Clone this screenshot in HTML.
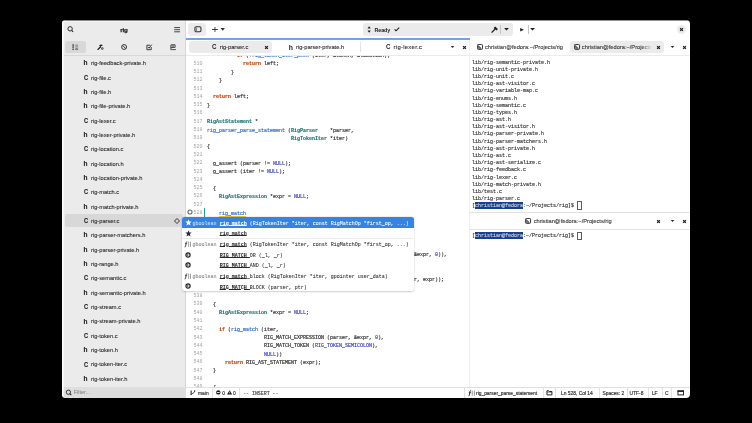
<!DOCTYPE html><html><head><meta charset="utf-8"><style>
*{margin:0;padding:0;box-sizing:border-box}
html,body{width:752px;height:423px;background:#000;overflow:hidden}
body{font-family:"Liberation Sans",sans-serif;color:#2e2e2e}
#w{position:absolute;left:62px;top:20px;width:628px;height:378px;overflow:hidden;border-radius:4px;background:#fff}
#in{position:absolute;left:-62px;top:-20px;width:752px;height:423px;will-change:transform}
.a{position:absolute}
.mono{font-family:"Liberation Mono",monospace;font-size:5px;white-space:pre}
.sans{font-family:"Liberation Sans",sans-serif;white-space:nowrap}
.ln{position:absolute;left:186px;width:16.5px;text-align:right;color:#a4a4a4;font-family:"Liberation Mono",monospace;font-size:5px;line-height:8.3px;white-space:pre}
.cl{position:absolute;left:207px;margin-top:0.6px;-webkit-text-stroke:0.15px currentColor;color:#2a2a2a;font-family:"Liberation Mono",monospace;font-size:5px;line-height:8.3px;white-space:pre}
.k{color:#c4410c;font-weight:bold}
.t{color:#1b7677;font-weight:bold}
.f{color:#2867cc}
.u{text-decoration:underline;text-decoration-thickness:0.45px;text-underline-offset:0.5px}
.n{color:#3b3fbf}
.frow{position:absolute;left:64px;width:119px;height:13px}
.fi{position:absolute;left:82.5px;margin-top:0.3px;width:6px;text-align:center;font-weight:bold;font-size:6.5px;color:#222;-webkit-text-stroke:0.1px #222}
.ft{position:absolute;left:91px;margin-top:1.1px;font-size:5.7px;color:#2c2c2c;-webkit-text-stroke:0.1px #2c2c2c}
.term{position:absolute;left:472px;margin-top:0.9px;-webkit-text-stroke:0.12px currentColor;color:#2a2a2a;font-family:"Liberation Mono",monospace;font-size:5px;line-height:7.2px;white-space:pre}
.sb{position:absolute;top:387.6px;height:11px;font-size:4.9px;line-height:11px;color:#2a2a2a;white-space:nowrap;-webkit-text-stroke:0.15px currentColor}
.sep{position:absolute;top:387.5px;width:0.6px;height:10.5px;background:#e2e2e2}
.pr{position:absolute;left:183px;width:231px;height:10.7px;font-family:"Liberation Mono",monospace;font-size:5px;line-height:10.7px;white-space:pre;color:#303030;-webkit-text-stroke:0.06px currentColor}
.pr .ty{position:absolute;top:0;left:9.5px;color:#8a8a8a;-webkit-text-stroke:0.1px currentColor}
.pr .nm{position:absolute;top:0;left:36.7px}
.pr b{font-weight:bold;text-decoration:underline;text-decoration-thickness:0.45px;text-underline-offset:0.15px}
</style></head><body>
<div id="w"><div id="in">
<div class="a" style="left:62px;top:20px;width:123.5px;height:378px;background:#ebebeb"></div>
<div class="a" style="left:185.3px;top:20px;width:0.8px;height:378px;background:#d6d6d6"></div>
<svg class="a" style="left:66px;top:25px" width="8" height="8" viewBox="0 0 8 8"><circle cx="4.1" cy="3.8" r="2.2" fill="none" stroke="#2a2a2a" stroke-width="1"/><line x1="5.7" y1="5.4" x2="7.1" y2="6.8" stroke="#2a2a2a" stroke-width="1.1"/></svg>
<div class="a sans" style="left:112px;top:25px;width:24px;text-align:center;font-size:6.2px;font-weight:bold;line-height:9px;color:#222;letter-spacing:-0.1px;-webkit-text-stroke:0.25px #222">rig</div>
<svg class="a" style="left:173.8px;top:26.8px" width="7" height="6" viewBox="0 0 7 6"><rect x="0.2" y="0.2" width="5.8" height="0.85" fill="#2a2a2a"/><rect x="0.2" y="2.3" width="5.8" height="0.85" fill="#2a2a2a"/><rect x="0.2" y="4.4" width="5.8" height="0.85" fill="#2a2a2a"/></svg>
<div class="a" style="left:64.5px;top:40.5px;width:21.5px;height:12.3px;background:#d8d8d8;border-radius:2.5px"></div>
<svg class="a" style="left:72px;top:44px" width="7" height="7" viewBox="0 0 7 7"><circle cx="1.1" cy="1.1" r="0.8" fill="#1e1e1e"/><circle cx="1.1" cy="3.1" r="0.8" fill="#1e1e1e"/><circle cx="1.1" cy="5.2" r="0.8" fill="#1e1e1e"/><rect x="3.2" y="0.75" width="2.9" height="0.8" fill="#6a6a6a"/><rect x="3.2" y="2.55" width="2.9" height="0.8" fill="#6a6a6a"/><rect x="3.2" y="4.6" width="2.9" height="0.9" fill="#1e1e1e"/></svg>
<svg class="a" style="left:96.5px;top:44px" width="8" height="7" viewBox="0 0 8 7"><path d="M0.9 5.5 L3.4 3" stroke="#1e1e1e" stroke-width="1.15" stroke-linecap="round"/><path d="M2.3 1.3 C3.3 0.2 4.9 0.2 5.8 1.2 L4.9 2 L4.6 1.8 L3.6 3 L2.6 2.2Z" fill="#1e1e1e"/><circle cx="5.3" cy="4.4" r="1.25" fill="#4a4a4a"/><circle cx="5.3" cy="4.4" r="0.45" fill="#ebebeb"/></svg>
<svg class="a" style="left:121px;top:44.4px" width="7" height="6" viewBox="0 0 7 6"><circle cx="3.1" cy="3" r="2.45" fill="none" stroke="#2a2a2a" stroke-width="0.95"/><line x1="1.5" y1="1.4" x2="4.7" y2="4.6" stroke="#2a2a2a" stroke-width="0.9"/></svg>
<svg class="a" style="left:145.5px;top:44px" width="7" height="7" viewBox="0 0 7 7"><path d="M5.2 3 L5.2 5.7 L0.9 5.7 L0.9 1.2 L4.2 1.2" fill="none" stroke="#2a2a2a" stroke-width="0.9"/><path d="M1.9 3 L3 4.2 L5.8 0.6" fill="none" stroke="#2a2a2a" stroke-width="0.9"/></svg>
<svg class="a" style="left:169.6px;top:44.2px" width="7" height="7" viewBox="0 0 7 7"><path d="M0.9 5.2 L0.9 0.8 L5.1 0.8 L5.1 3.4 L0.9 3.4 M3 0.8 L3 3.4" fill="none" stroke="#2a2a2a" stroke-width="0.85"/><line x1="0.5" y1="5.6" x2="5.9" y2="5.6" stroke="#2a2a2a" stroke-width="0.8"/></svg>
<div class="a" style="left:62px;top:55.2px;width:123.5px;height:0.7px;background:#d8d8d8"></div>
<div class="fi sans" style="top:58.10px;line-height:9px">h</div>
<div class="ft sans" style="top:58.10px;line-height:9px">rig-feedback-private.h</div>
<div class="fi sans" style="top:72.44px;line-height:9px;transform:scaleX(0.86)">C</div>
<div class="ft sans" style="top:72.44px;line-height:9px">rig-file.c</div>
<div class="fi sans" style="top:86.78px;line-height:9px">h</div>
<div class="ft sans" style="top:86.78px;line-height:9px">rig-file.h</div>
<div class="fi sans" style="top:101.12px;line-height:9px">h</div>
<div class="ft sans" style="top:101.12px;line-height:9px">rig-file-private.h</div>
<div class="fi sans" style="top:115.46px;line-height:9px;transform:scaleX(0.86)">C</div>
<div class="ft sans" style="top:115.46px;line-height:9px">rig-lexer.c</div>
<div class="fi sans" style="top:129.80px;line-height:9px">h</div>
<div class="ft sans" style="top:129.80px;line-height:9px">rig-lexer-private.h</div>
<div class="fi sans" style="top:144.14px;line-height:9px;transform:scaleX(0.86)">C</div>
<div class="ft sans" style="top:144.14px;line-height:9px">rig-location.c</div>
<div class="fi sans" style="top:158.48px;line-height:9px">h</div>
<div class="ft sans" style="top:158.48px;line-height:9px">rig-location.h</div>
<div class="fi sans" style="top:172.82px;line-height:9px">h</div>
<div class="ft sans" style="top:172.82px;line-height:9px">rig-location-private.h</div>
<div class="fi sans" style="top:187.16px;line-height:9px;transform:scaleX(0.86)">C</div>
<div class="ft sans" style="top:187.16px;line-height:9px">rig-match.c</div>
<div class="fi sans" style="top:201.50px;line-height:9px">h</div>
<div class="ft sans" style="top:201.50px;line-height:9px">rig-match-private.h</div>
<div class="a" style="left:64.5px;top:214.04px;width:118.5px;height:12.6px;background:#d8d8d8;border-radius:2.5px"></div>
<svg class="a" style="left:174.4px;top:217.54px" width="6" height="6" viewBox="0 0 6 6"><path d="M3 0.5 L5.5 3 L3 5.5 L0.5 3Z" fill="none" stroke="#2a2a2a" stroke-width="0.95" stroke-linejoin="round"/></svg>
<div class="fi sans" style="top:215.84px;line-height:9px;transform:scaleX(0.86)">C</div>
<div class="ft sans" style="top:215.84px;line-height:9px">rig-parser.c</div>
<div class="fi sans" style="top:230.18px;line-height:9px">h</div>
<div class="ft sans" style="top:230.18px;line-height:9px">rig-parser-matchers.h</div>
<div class="fi sans" style="top:244.52px;line-height:9px">h</div>
<div class="ft sans" style="top:244.52px;line-height:9px">rig-parser-private.h</div>
<div class="fi sans" style="top:258.86px;line-height:9px">h</div>
<div class="ft sans" style="top:258.86px;line-height:9px">rig-range.h</div>
<div class="fi sans" style="top:273.20px;line-height:9px;transform:scaleX(0.86)">C</div>
<div class="ft sans" style="top:273.20px;line-height:9px">rig-semantic.c</div>
<div class="fi sans" style="top:287.54px;line-height:9px">h</div>
<div class="ft sans" style="top:287.54px;line-height:9px">rig-semantic-private.h</div>
<div class="fi sans" style="top:301.88px;line-height:9px;transform:scaleX(0.86)">C</div>
<div class="ft sans" style="top:301.88px;line-height:9px">rig-stream.c</div>
<div class="fi sans" style="top:316.22px;line-height:9px">h</div>
<div class="ft sans" style="top:316.22px;line-height:9px">rig-stream-private.h</div>
<div class="fi sans" style="top:330.56px;line-height:9px;transform:scaleX(0.86)">C</div>
<div class="ft sans" style="top:330.56px;line-height:9px">rig-token.c</div>
<div class="fi sans" style="top:344.90px;line-height:9px">h</div>
<div class="ft sans" style="top:344.90px;line-height:9px">rig-token.h</div>
<div class="fi sans" style="top:359.24px;line-height:9px;transform:scaleX(0.86)">C</div>
<div class="ft sans" style="top:359.24px;line-height:9px">rig-token-iter.c</div>
<div class="fi sans" style="top:373.58px;line-height:9px">h</div>
<div class="ft sans" style="top:373.58px;line-height:9px">rig-token-iter.h</div>
<div class="a" style="left:62px;top:386.6px;width:123.5px;height:11.4px;background:#dedede"></div>
<svg class="a" style="left:64.5px;top:388.6px" width="8" height="8" viewBox="0 0 8 8"><circle cx="3.4" cy="3.2" r="2.15" fill="none" stroke="#2e2e2e" stroke-width="0.95"/><line x1="4.9" y1="4.7" x2="6.3" y2="6.1" stroke="#2e2e2e" stroke-width="1.05"/></svg>
<div class="a sans" style="left:73.8px;top:387px;font-size:5.4px;line-height:10px;color:#7a7a7a">Filter...</div>
<div class="a" style="left:188.4px;top:23px;width:17.6px;height:13px;background:#ebebeb;border-radius:3px"></div>
<svg class="a" style="left:193.5px;top:26.3px" width="8" height="7" viewBox="0 0 8 7"><rect x="0.95" y="0.8" width="6" height="5" rx="1.2" fill="none" stroke="#2e2e2e" stroke-width="1.05"/><rect x="1.6" y="1.4" width="1.4" height="3.8" fill="#8a8a8a"/></svg>
<svg class="a" style="left:212px;top:26.9px" width="13" height="5" viewBox="0 0 13 5"><rect x="0" y="2.05" width="5.9" height="0.9" fill="#2e2e2e"/><rect x="2.5" y="0" width="0.9" height="4.9" fill="#2e2e2e"/><path d="M8.5 1.1 L12.9 1.1 L10.7 3.8Z" fill="#2e2e2e"/></svg>
<div class="a" style="left:363px;top:23px;width:150px;height:13px;background:#ebebeb;border-radius:3px"></div>
<svg class="a" style="left:366.5px;top:26px" width="5" height="8" viewBox="0 0 5 8"><path d="M0.5 2.4 L2.15 0.2 L3.8 2.4Z M0.5 4.6 L2.15 6.8 L3.8 4.6Z" fill="#1e1e1e"/></svg>
<div class="a sans" style="left:374.6px;top:25.6px;font-size:5.4px;font-weight:bold;line-height:9px;color:#1e1e1e;letter-spacing:-0.15px">Ready</div>
<svg class="a" style="left:393.8px;top:26.8px" width="6" height="5" viewBox="0 0 6 5"><path d="M0.6 2.4 L2 3.8 L5.2 0.6" fill="none" stroke="#1e1e1e" stroke-width="1.15"/></svg>
<svg class="a" style="left:491px;top:25.8px" width="8" height="7" viewBox="0 0 8 7"><path d="M1 6.2 L4.2 2.9" stroke="#1e1e1e" stroke-width="1.25" stroke-linecap="round"/><path d="M2.6 1.9 L4.1 0.4 L6.9 3.1 L5.6 4.4 L4.5 3.5 L3.7 3.1Z" fill="#1e1e1e"/></svg>
<div class="a" style="left:500.4px;top:25.2px;width:0.6px;height:8.4px;background:#c4c4c4"></div>
<svg class="a" style="left:504.4px;top:28px" width="5" height="3" viewBox="0 0 5 3"><path d="M0.1 0 L4.9 0 L2.5 2.5Z" fill="#1e1e1e"/></svg>
<svg class="a" style="left:520px;top:27.5px" width="5" height="4" viewBox="0 0 5 4"><path d="M0.2 0.1 L4 1.7 L0.2 3.4Z" fill="#1e1e1e"/></svg>
<div class="a" style="left:528.3px;top:25.2px;width:0.6px;height:8.4px;background:#c4c4c4"></div>
<svg class="a" style="left:530.3px;top:28px" width="5" height="3" viewBox="0 0 5 3"><path d="M0.1 0 L4.9 0 L2.5 2.5Z" fill="#1e1e1e"/></svg>
<div class="a" style="left:677px;top:24.9px;width:9px;height:9px;border-radius:50%;background:#ebebeb"></div>
<svg class="a" style="left:679px;top:26.9px" width="5" height="5" viewBox="0 0 5 5"><path d="M1.1 1.1 L3.9 3.9 M3.9 1.1 L1.1 3.9" stroke="#1e1e1e" stroke-width="1.2"/></svg>
<div class="a" style="left:186px;top:38px;width:284px;height:1.6px;background:#6fa3ea"></div>
<div class="a" style="left:186px;top:55.1px;width:504px;height:0.7px;background:#ebebeb"></div>
<div class="a" style="left:469.2px;top:39.5px;width:1.2px;height:347.5px;background:#eeeeee"></div>
<div class="a" style="left:189px;top:41px;width:82.6px;height:11.6px;background:#ebebeb;border-radius:3px"></div>
<div class="a sans" style="left:212.3px;top:42.4px;font-size:7px;font-weight:bold;line-height:9px;color:#222;transform:scaleX(0.88);transform-origin:0 0">C</div>
<div class="a sans" style="left:219.8px;top:42.5px;font-size:5.7px;line-height:9px;color:#2a2a2a;-webkit-text-stroke:0.1px #2a2a2a">rig-parser.c</div>
<svg class="a" style="left:263.5px;top:44.7px" width="5" height="5" viewBox="0 0 5 5"><path d="M1.1 1.1 L3.9 3.9 M3.9 1.1 L1.1 3.9" stroke="#1e1e1e" stroke-width="1.2"/></svg>
<div class="a sans" style="left:288.7px;top:42.6px;font-size:6.8px;font-weight:bold;line-height:9px;color:#222">h</div>
<div class="a sans" style="left:296px;top:42.5px;font-size:5.7px;line-height:9px;color:#2a2a2a;-webkit-text-stroke:0.1px #2a2a2a">rig-parser-private.h</div>
<div class="a" style="left:360px;top:42px;width:0.6px;height:10px;background:#e2e2e2"></div>
<div class="a sans" style="left:385.6px;top:42.4px;font-size:7px;font-weight:bold;line-height:9px;color:#222;transform:scaleX(0.88);transform-origin:0 0">C</div>
<div class="a sans" style="left:393.6px;top:42.5px;font-size:5.9px;letter-spacing:0.28px;line-height:9px;color:#2a2a2a;-webkit-text-stroke:0.1px #2a2a2a">rig-lexer.c</div>
<svg class="a" style="left:449.5px;top:45px" width="5" height="4" viewBox="0 0 5 4"><path d="M0.6 0.9 L4.4 0.9 L2.5 3Z" fill="#2e2e2e"/></svg>
<svg class="a" style="left:461.5px;top:44.7px" width="5" height="5" viewBox="0 0 5 5"><path d="M1.1 1.1 L3.9 3.9 M3.9 1.1 L1.1 3.9" stroke="#1e1e1e" stroke-width="1.2"/></svg>
<svg class="a" style="left:477px;top:44px" width="7" height="7" viewBox="0 0 7 7"><rect x="0.45" y="0.45" width="5.1" height="4.9" rx="0.9" fill="none" stroke="#1e1e1e" stroke-width="0.9"/><path d="M0.9 1.3 L0.9 4.9 L4.6 4.9Z" fill="#7a7a7a"/><path d="M1.1 1.5 L4.3 4.5" stroke="#1e1e1e" stroke-width="0.75"/></svg>
<div class="a sans" style="left:485px;top:42.5px;font-size:5.7px;line-height:9px;color:#3a3a3a;-webkit-text-stroke:0.12px #3a3a3a">christian@fedora:~/Projects/rig</div>
<div class="a" style="left:569.5px;top:40.8px;width:94.3px;height:11.9px;background:#ebebeb;border-radius:3px"></div>
<svg class="a" style="left:573.8px;top:44px" width="7" height="7" viewBox="0 0 7 7"><rect x="0.45" y="0.45" width="5.1" height="4.9" rx="0.9" fill="none" stroke="#1e1e1e" stroke-width="0.9"/><path d="M0.9 1.3 L0.9 4.9 L4.6 4.9Z" fill="#7a7a7a"/><path d="M1.1 1.5 L4.3 4.5" stroke="#1e1e1e" stroke-width="0.75"/></svg>
<div class="a" style="left:581.8px;top:42.5px;width:70px;overflow:hidden;-webkit-mask-image:linear-gradient(to right,#000 85%,transparent)"><div class="sans" style="font-size:5.7px;line-height:9px;color:#3a3a3a;-webkit-text-stroke:0.12px #3a3a3a">christian@fedora:~/Projects/rig</div></div>
<svg class="a" style="left:656px;top:44.7px" width="5" height="5" viewBox="0 0 5 5"><path d="M1.1 1.1 L3.9 3.9 M3.9 1.1 L1.1 3.9" stroke="#1e1e1e" stroke-width="1.2"/></svg>
<svg class="a" style="left:670px;top:45px" width="5" height="4" viewBox="0 0 5 4"><path d="M0.6 0.9 L4.4 0.9 L2.5 3Z" fill="#2e2e2e"/></svg>
<svg class="a" style="left:682px;top:44.7px" width="5" height="5" viewBox="0 0 5 5"><path d="M1.1 1.1 L3.9 3.9 M3.9 1.1 L1.1 3.9" stroke="#1e1e1e" stroke-width="1.2"/></svg>
<div class="a" style="left:186px;top:56px;width:283.3px;height:331px;overflow:hidden">
<div class="a" style="left:-186px;top:-56px;width:752px;height:423px">
<div class="ln" style="top:51.34px">509</div>
<div class="cl" style="top:51.34px">          <span class="k">if</span> (!<span class="f">rig_token_iter_peek</span> (iter, &amp;token, &amp;location))</div>
<div class="ln" style="top:59.64px">510</div>
<div class="cl" style="top:59.64px">            <span class="k">return</span> left;</div>
<div class="ln" style="top:67.94px">511</div>
<div class="cl" style="top:67.94px">        }</div>
<div class="ln" style="top:76.24px">512</div>
<div class="cl" style="top:76.24px">    }</div>
<div class="ln" style="top:84.54px">513</div>
<div class="cl" style="top:84.54px"></div>
<div class="ln" style="top:92.84px">514</div>
<div class="cl" style="top:92.84px">  <span class="k">return</span> left;</div>
<div class="ln" style="top:101.14px">515</div>
<div class="cl" style="top:101.14px">}</div>
<div class="ln" style="top:109.44px">516</div>
<div class="cl" style="top:109.44px"></div>
<div class="ln" style="top:117.74px">517</div>
<div class="cl" style="top:117.74px"><span class="t">RigAstStatement</span> *</div>
<div class="ln" style="top:126.04px">518</div>
<div class="cl" style="top:126.04px"><span class="f">rig_parser_parse_statement</span> (<span class="t">RigParser</span>    *parser,</div>
<div class="ln" style="top:134.34px">519</div>
<div class="cl" style="top:134.34px">                            <span class="t">RigTokenIter</span> *iter)</div>
<div class="ln" style="top:142.64px">520</div>
<div class="cl" style="top:142.64px">{</div>
<div class="ln" style="top:150.94px">521</div>
<div class="cl" style="top:150.94px"></div>
<div class="ln" style="top:159.24px">522</div>
<div class="cl" style="top:159.24px">  g_assert (parser != <span class="n">NULL</span>);</div>
<div class="ln" style="top:167.54px">523</div>
<div class="cl" style="top:167.54px">  g_assert (iter != <span class="n">NULL</span>);</div>
<div class="ln" style="top:175.84px">524</div>
<div class="cl" style="top:175.84px"></div>
<div class="ln" style="top:184.14px">525</div>
<div class="cl" style="top:184.14px">  {</div>
<div class="ln" style="top:192.44px">526</div>
<div class="cl" style="top:192.44px">    <span class="t">RigAstExpression</span> *expr = <span class="n">NULL</span>;</div>
<div class="ln" style="top:200.74px">527</div>
<div class="cl" style="top:200.74px"></div>
<div class="ln" style="top:209.04px">528</div>
<div class="cl" style="top:209.04px">    <span class="f u" style="text-decoration-color:#f2cc3a">rig_match</span></div>
<div class="ln" style="top:217.34px">529</div>
<div class="cl" style="top:217.34px"></div>
<div class="ln" style="top:225.64px">530</div>
<div class="cl" style="top:225.64px"></div>
<div class="ln" style="top:233.94px">531</div>
<div class="cl" style="top:233.94px"></div>
<div class="ln" style="top:242.24px">532</div>
<div class="cl" style="top:242.24px"></div>
<div class="ln" style="top:250.54px">533</div>
<div class="cl" style="top:250.54px">                   RIG_MATCH_EXPRESSION_AT (parser, &amp;location,       &amp;expr, <span class="n">0</span>)),</div>
<div class="ln" style="top:258.84px">534</div>
<div class="cl" style="top:258.84px"></div>
<div class="ln" style="top:267.14px">535</div>
<div class="cl" style="top:267.14px"></div>
<div class="ln" style="top:275.44px">536</div>
<div class="cl" style="top:275.44px">      return RIG_AST_STATEMENT (rig_ast_statement_new_expression (parr, expr));</div>
<div class="ln" style="top:283.74px">537</div>
<div class="cl" style="top:283.74px"></div>
<div class="ln" style="top:292.04px">538</div>
<div class="cl" style="top:292.04px"></div>
<div class="ln" style="top:300.34px">539</div>
<div class="cl" style="top:300.34px">  {</div>
<div class="ln" style="top:308.64px">540</div>
<div class="cl" style="top:308.64px">    <span class="t">RigAstExpression</span> *expr = <span class="n">NULL</span>;</div>
<div class="ln" style="top:316.94px">541</div>
<div class="cl" style="top:316.94px"></div>
<div class="ln" style="top:325.24px">542</div>
<div class="cl" style="top:325.24px">    <span class="k">if</span> (<span class="f">rig_match</span> (iter,</div>
<div class="ln" style="top:333.54px">543</div>
<div class="cl" style="top:333.54px">                   RIG_MATCH_EXPRESSION (parser, &amp;expr, <span class="n">0</span>),</div>
<div class="ln" style="top:341.84px">544</div>
<div class="cl" style="top:341.84px">                   RIG_MATCH_TOKEN (<span class="f n">RIG_TOKEN_SEMICOLON</span>),</div>
<div class="ln" style="top:350.14px">545</div>
<div class="cl" style="top:350.14px">                   <span class="n">NULL</span>))</div>
<div class="ln" style="top:358.44px">546</div>
<div class="cl" style="top:358.44px">      <span class="k">return</span> RIG_AST_STATEMENT (expr);</div>
<div class="ln" style="top:366.74px">547</div>
<div class="cl" style="top:366.74px">  }</div>
<div class="ln" style="top:375.04px">548</div>
<div class="cl" style="top:375.04px"></div>
<div class="ln" style="top:383.34px">549</div>
<div class="cl" style="top:383.34px">  {</div>
</div></div>
<svg class="a" style="left:186.6px;top:209.4px" width="6" height="6" viewBox="0 0 6 6"><circle cx="3" cy="3" r="2.05" fill="none" stroke="#6a6a6a" stroke-width="1.1"/></svg>
<div class="a" style="left:203.9px;top:208.2px;width:1px;height:8.8px;background:#2aa198"></div>
<div class="a" style="left:182.3px;top:217px;width:231.6px;height:73.8px;background:#fff;border-radius:3px;box-shadow:0 0.5px 2px rgba(0,0,0,0.18),0 0 0 0.5px rgba(0,0,0,0.05);overflow:hidden">
</div>
<div class="a" style="left:182.3px;top:217px;width:231.6px;height:10.6px;background:#3584e4;border-radius:2.5px 2.5px 0 0"></div>
<div class="a" style="left:182.3px;top:238.1px;width:231.6px;height:0.6px;background:#ebebeb"></div>
<div class="pr" style="top:218.80px;color:#fff">
<svg class="a" style="left:2.2px;top:0.3px" width="7" height="7" viewBox="0 0 7 7"><path d="M3.5 0.3 L4.35 2.45 L6.7 2.55 L4.9 4.05 L5.5 6.6 L3.5 5.25 L1.5 6.6 L2.1 4.05 L0.3 2.55 L2.65 2.45Z" fill="#fff"/></svg>
<span class="ty" style="color:#c4d9f6">gboolean</span>
<span class="nm"><b>rig_match</b> (RigTokenIter *iter, const RigMatchOp *first_op, ...)</span></div>
<div class="pr" style="top:229.42px;color:#2a2a2a">
<svg class="a" style="left:2.2px;top:0.3px" width="7" height="7" viewBox="0 0 7 7"><path d="M3.5 0.3 L4.35 2.45 L6.7 2.55 L4.9 4.05 L5.5 6.6 L3.5 5.25 L1.5 6.6 L2.1 4.05 L0.3 2.55 L2.65 2.45Z" fill="#2a2a2a"/></svg>
<span class="nm"><b>rig_match</b></span></div>
<div class="pr" style="top:240.04px;color:#2a2a2a">
<svg class="a" style="left:1.4px;top:1.1px" width="8" height="7" viewBox="0 0 8 7"><path d="M3.2 0.8 C2.2 0.6 2.1 1.5 2 2.5 L1.6 5.2 C1.5 6 1 6.2 0.6 6" fill="none" stroke="#2a2a2a" stroke-width="0.9"/><path d="M1.1 2.6 L3.2 2.6" stroke="#2a2a2a" stroke-width="0.7"/><rect x="4.3" y="0.6" width="0.8" height="5.2" fill="#8a8a8a"/><rect x="6.2" y="0.6" width="0.8" height="5.2" fill="#8a8a8a"/></svg>
<span class="ty" style="color:#8e8e8e">gboolean</span>
<span class="nm"><b>rig_match</b> (RigTokenIter *iter, const RigMatchOp *first_op, ...)</span></div>
<div class="pr" style="top:250.66px;color:#2a2a2a">
<svg class="a" style="left:2.2px;top:0.9px" width="6" height="6" viewBox="0 0 6 6"><circle cx="3" cy="3" r="2.1" fill="#fff" stroke="#1e1e1e" stroke-width="1.2"/><path d="M2.2 2 L2.2 4 L3.8 3Z" fill="#1e1e1e"/></svg>
<span class="nm"><b>RIG_MATCH_</b>OR (_l, _r)</span></div>
<div class="pr" style="top:261.28px;color:#2a2a2a">
<svg class="a" style="left:2.2px;top:0.9px" width="6" height="6" viewBox="0 0 6 6"><circle cx="3" cy="3" r="2.1" fill="#fff" stroke="#1e1e1e" stroke-width="1.2"/><path d="M2.2 2 L2.2 4 L3.8 3Z" fill="#1e1e1e"/></svg>
<span class="nm"><b>RIG_MATCH_</b>AND (_l, _r)</span></div>
<div class="pr" style="top:271.90px;color:#2a2a2a">
<svg class="a" style="left:1.4px;top:1.1px" width="8" height="7" viewBox="0 0 8 7"><path d="M3.2 0.8 C2.2 0.6 2.1 1.5 2 2.5 L1.6 5.2 C1.5 6 1 6.2 0.6 6" fill="none" stroke="#2a2a2a" stroke-width="0.9"/><path d="M1.1 2.6 L3.2 2.6" stroke="#2a2a2a" stroke-width="0.7"/><rect x="4.3" y="0.6" width="0.8" height="5.2" fill="#8a8a8a"/><rect x="6.2" y="0.6" width="0.8" height="5.2" fill="#8a8a8a"/></svg>
<span class="ty" style="color:#8e8e8e">gboolean</span>
<span class="nm"><b>rig_match</b>_block (RigTokenIter *iter, gpointer user_data)</span></div>
<div class="pr" style="top:282.52px;color:#2a2a2a">
<svg class="a" style="left:2.2px;top:0.9px" width="6" height="6" viewBox="0 0 6 6"><circle cx="3" cy="3" r="2.1" fill="#fff" stroke="#1e1e1e" stroke-width="1.2"/><path d="M2.2 2 L2.2 4 L3.8 3Z" fill="#1e1e1e"/></svg>
<span class="nm"><b>RIG_MATCH_</b>BLOCK (parser, ptr)</span></div>
<div class="a" style="left:470px;top:56px;width:220px;height:156px;overflow:hidden"><div class="a" style="left:-470px;top:-56px;width:752px;height:423px">
<div class="term" style="top:58.80px">lib/rig-semantic-private.h</div>
<div class="term" style="top:65.98px">lib/rig-unit-private.h</div>
<div class="term" style="top:73.16px">lib/rig-unit.c</div>
<div class="term" style="top:80.34px">lib/rig-ast-visitor.c</div>
<div class="term" style="top:87.52px">lib/rig-variable-map.c</div>
<div class="term" style="top:94.70px">lib/rig-enums.h</div>
<div class="term" style="top:101.88px">lib/rig-semantic.c</div>
<div class="term" style="top:109.06px">lib/rig-types.h</div>
<div class="term" style="top:116.24px">lib/rig-ast.h</div>
<div class="term" style="top:123.42px">lib/rig-ast-visitor.h</div>
<div class="term" style="top:130.60px">lib/rig-parser-private.h</div>
<div class="term" style="top:137.78px">lib/rig-parser-matchers.h</div>
<div class="term" style="top:144.96px">lib/rig-ast-private.h</div>
<div class="term" style="top:152.14px">lib/rig-ast.c</div>
<div class="term" style="top:159.32px">lib/rig-ast-serialize.c</div>
<div class="term" style="top:166.50px">lib/rig-feedback.c</div>
<div class="term" style="top:173.68px">lib/rig-lexer.c</div>
<div class="term" style="top:180.86px">lib/rig-match-private.h</div>
<div class="term" style="top:188.04px">lib/test.c</div>
<div class="term" style="top:195.22px">lib/rig-parser.c</div>
<div class="a" style="left:475.2px;top:202px;width:48.3px;height:6.8px;background:#18408f"></div>
<div class="term" style="top:202.40px">[<span style="color:#c9d3e8">christian@fedora</span>:~/Projects/rig]$ </div>
<div class="a" style="left:577px;top:201.1px;width:4.9px;height:8.5px;border:0.7px solid #5a5a5a;border-radius:0.5px"></div>
</div></div>
<div class="a" style="left:470px;top:212.3px;width:220px;height:0.7px;background:#e2e2e2"></div>
<svg class="a" style="left:524.6px;top:218px" width="7" height="7" viewBox="0 0 7 7"><rect x="0.45" y="0.45" width="5.1" height="4.9" rx="0.9" fill="none" stroke="#1e1e1e" stroke-width="0.9"/><path d="M0.9 1.3 L0.9 4.9 L4.6 4.9Z" fill="#7a7a7a"/><path d="M1.1 1.5 L4.3 4.5" stroke="#1e1e1e" stroke-width="0.75"/></svg>
<div class="a sans" style="left:533.7px;top:216.7px;font-size:5.7px;line-height:9px;color:#3a3a3a;-webkit-text-stroke:0.12px #3a3a3a">christian@fedora:~/Projects/rig</div>
<svg class="a" style="left:656px;top:218.5px" width="5" height="5" viewBox="0 0 5 5"><path d="M1.1 1.1 L3.9 3.9 M3.9 1.1 L1.1 3.9" stroke="#1e1e1e" stroke-width="1.2"/></svg>
<svg class="a" style="left:670px;top:219px" width="5" height="4" viewBox="0 0 5 4"><path d="M0.6 0.9 L4.4 0.9 L2.5 3Z" fill="#2e2e2e"/></svg>
<svg class="a" style="left:682px;top:218.5px" width="5" height="5" viewBox="0 0 5 5"><path d="M1.1 1.1 L3.9 3.9 M3.9 1.1 L1.1 3.9" stroke="#1e1e1e" stroke-width="1.2"/></svg>
<div class="a" style="left:470px;top:229.1px;width:220px;height:0.7px;background:#e2e2e2"></div>
<div class="a" style="left:475.2px;top:232.40px;width:48.3px;height:6.8px;background:#18408f"></div>
<div class="term" style="top:232.60px">[<span style="color:#c9d3e8">christian@fedora</span>:~/Projects/rig]$ </div>
<div class="a" style="left:577px;top:231.50px;width:4.9px;height:8.5px;border:0.7px solid #5a5a5a;border-radius:0.5px"></div>
<div class="a" style="left:186px;top:386.8px;width:504px;height:0.6px;background:#e0e0e0"></div>
<svg class="a" style="left:189.5px;top:389.5px" width="7" height="6" viewBox="0 0 7 6"><rect x="0.6" y="0.5" width="1.1" height="4.6" fill="#2a2a2a"/><circle cx="4.6" cy="1.1" r="0.75" fill="#2a2a2a"/><path d="M4.6 1.3 C4.6 3 2.2 3 1.2 4.6" fill="none" stroke="#2a2a2a" stroke-width="0.9"/></svg>
<div class="sb sans" style="left:198px">main</div>
<div class="sep" style="left:212px"></div>
<svg class="a" style="left:216.2px;top:390.2px" width="5" height="5" viewBox="0 0 5 5"><circle cx="2.3" cy="2.4" r="2.2" fill="#1e1e1e"/><rect x="0.9" y="2" width="2.8" height="0.85" fill="#fff"/></svg>
<div class="sb sans" style="left:222.2px">0</div>
<svg class="a" style="left:227px;top:389.9px" width="6" height="5" viewBox="0 0 6 5"><path d="M2.6 0.2 L5.2 4.6 L0 4.6Z" fill="#1e1e1e"/><rect x="2.3" y="1.6" width="0.6" height="1.7" fill="#fff"/></svg>
<div class="sb sans" style="left:233px">0</div>
<div class="sep" style="left:239.2px"></div>
<div class="sb mono" style="left:243.2px;color:#444">-- INSERT --</div>
<div class="sep" style="left:464.2px"></div>
<svg class="a" style="left:467.5px;top:389.5px" width="8" height="7" viewBox="0 0 8 7"><path d="M3 0.7 C2.1 0.5 1.9 1.4 1.8 2.4 L1.5 4.9 C1.4 5.7 0.9 5.9 0.5 5.7" fill="none" stroke="#1e1e1e" stroke-width="1"/><path d="M0.9 2.5 L2.9 2.5" stroke="#1e1e1e" stroke-width="0.7"/><rect x="3.8" y="0.6" width="0.75" height="5.2" fill="#777"/><rect x="5.9" y="0.6" width="0.75" height="5.2" fill="#777"/></svg>
<div class="sb sans" style="left:476px">rig_parser_parse_statement</div>
<div class="sep" style="left:542.8px"></div>
<svg class="a" style="left:545.6px;top:389.5px" width="7" height="6" viewBox="0 0 7 6"><path d="M0.95 0.75 L2.8 0.75 L3.4 1.5 L5.9 1.5 L5.9 4.9 L0.95 4.9Z" fill="none" stroke="#1e1e1e" stroke-width="0.95"/><line x1="1" y1="2.1" x2="5.9" y2="2.1" stroke="#1e1e1e" stroke-width="0.6"/></svg>
<div class="sep" style="left:555.2px"></div>
<div class="sb sans" style="left:561px">Ln 528, Col 14</div>
<div class="sep" style="left:598.8px"></div>
<div class="sb sans" style="left:602.5px">Spaces: 2</div>
<div class="sep" style="left:626.6px"></div>
<div class="sb sans" style="left:629.6px">UTF-8</div>
<div class="sep" style="left:648.3px"></div>
<div class="sb sans" style="left:651.9px">LF</div>
<div class="sep" style="left:662px"></div>
<div class="sb sans" style="left:665px">C</div>
<div class="sep" style="left:671.1px"></div>
<svg class="a" style="left:677.3px;top:389.5px" width="8" height="6" viewBox="0 0 8 6"><rect x="0.95" y="0.9" width="5.6" height="4" fill="none" stroke="#1e1e1e" stroke-width="0.95"/><rect x="0.5" y="0.5" width="6.5" height="1.4" fill="#1e1e1e"/></svg>
<div class="a" style="left:62px;top:20px;width:628px;height:1px;background:rgba(0,0,0,0.42)"></div>
<div class="a" style="left:62px;top:21px;width:123.5px;height:1.2px;background:linear-gradient(#fff,rgba(255,255,255,0))"></div>
<div class="a" style="left:62px;top:21px;width:1.8px;height:377px;background:linear-gradient(to right,#fff 55%,rgba(255,255,255,0))"></div>
</div></div></body></html>
